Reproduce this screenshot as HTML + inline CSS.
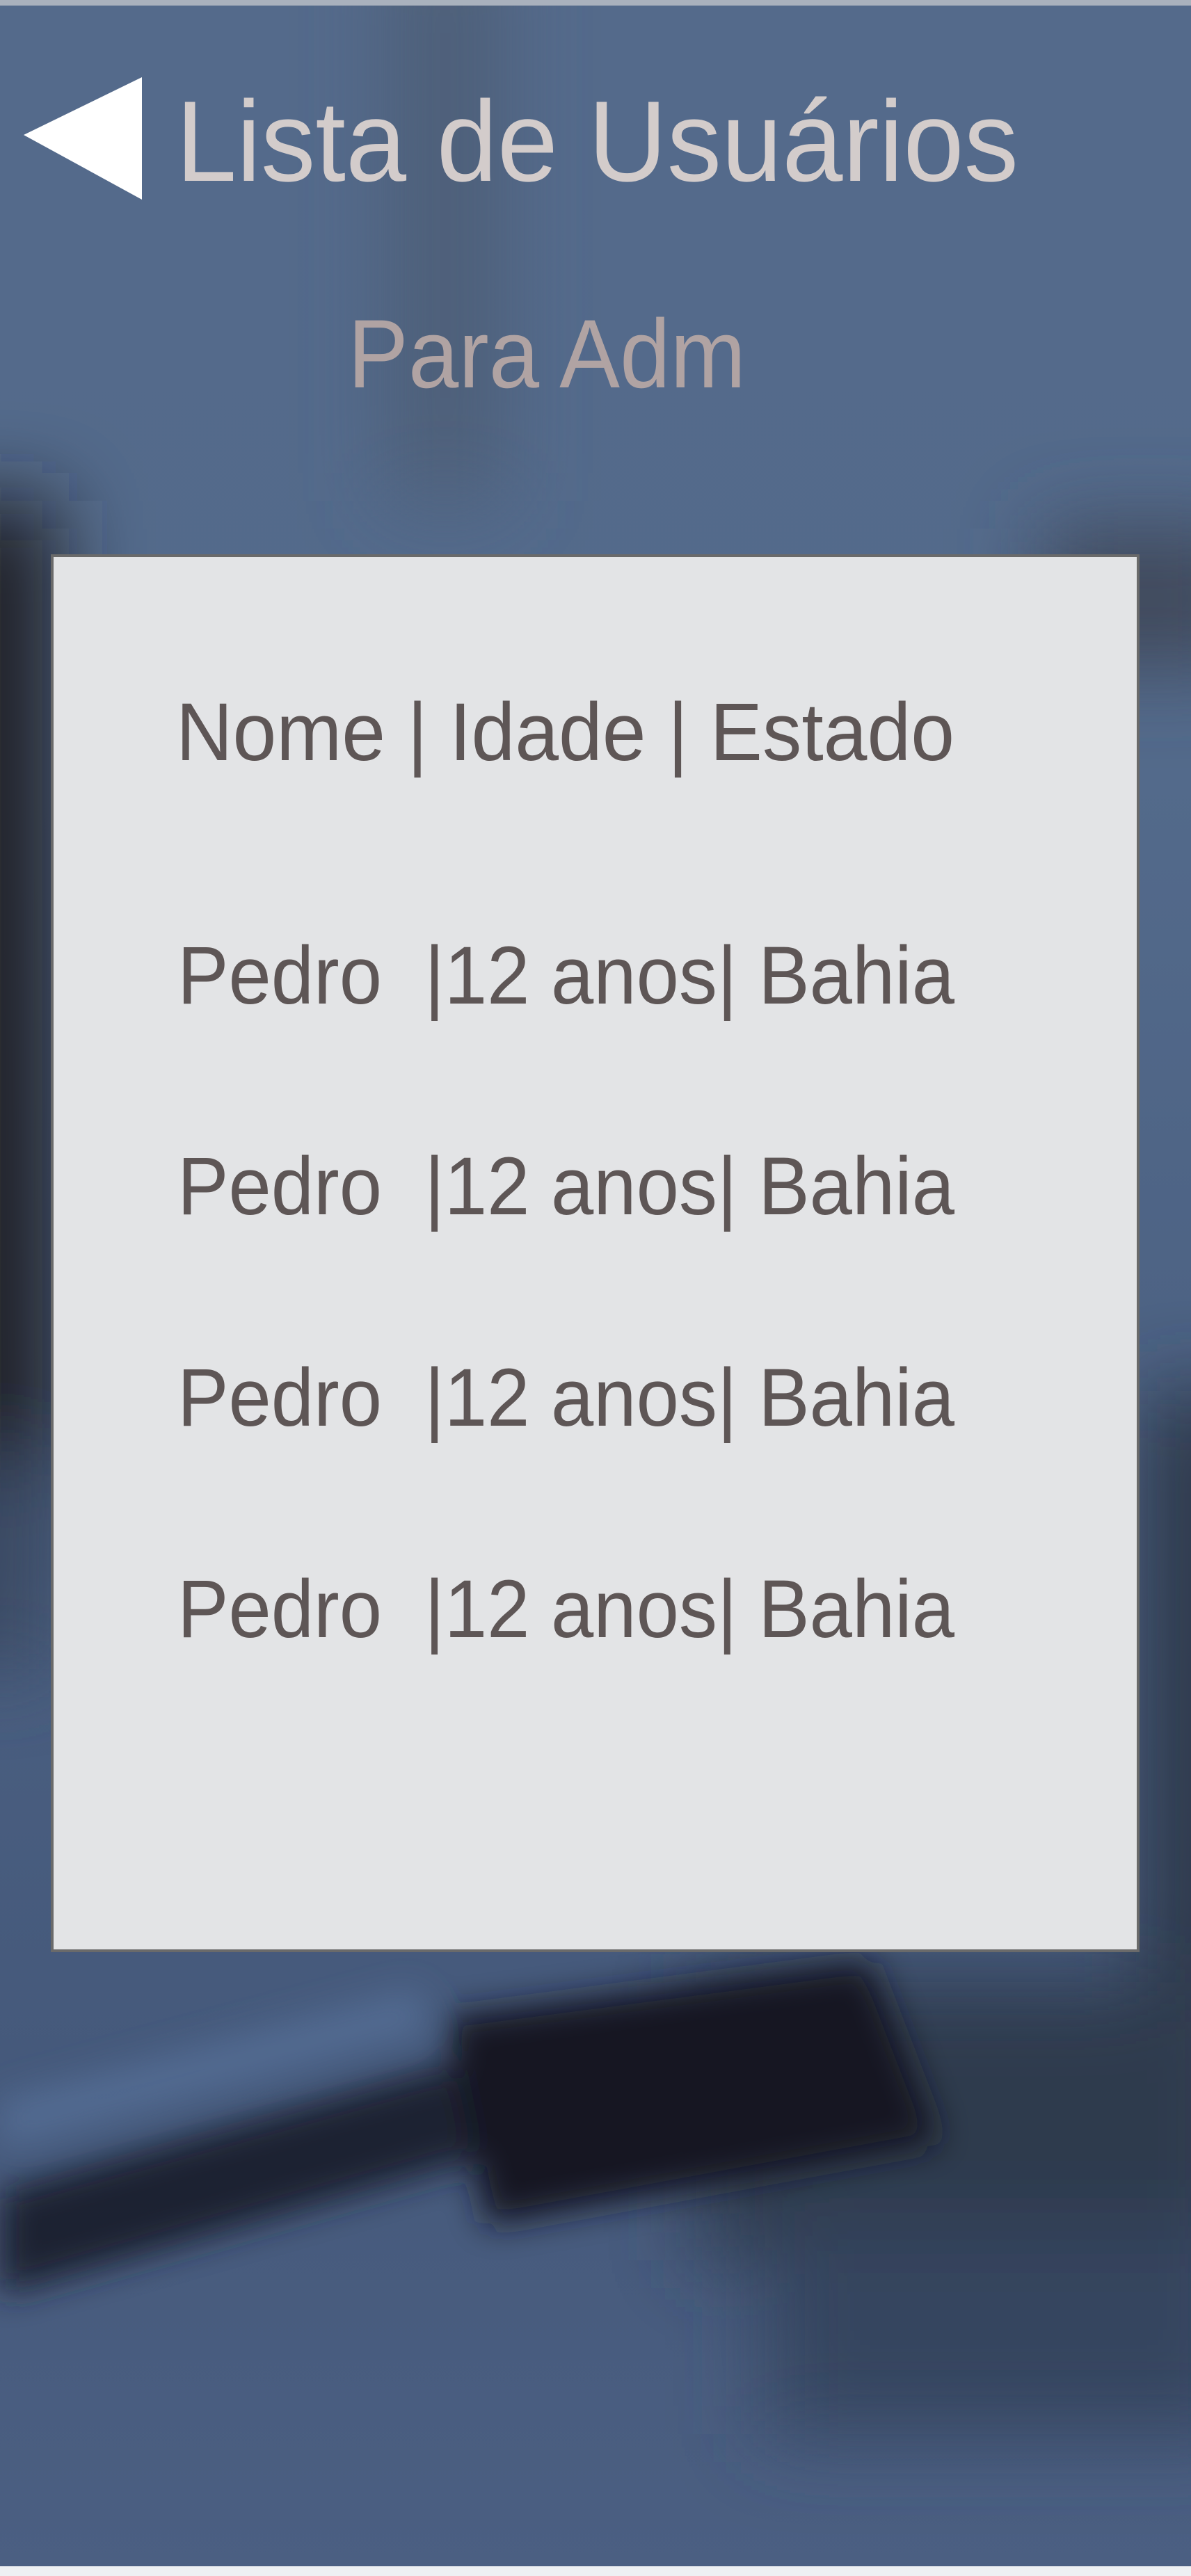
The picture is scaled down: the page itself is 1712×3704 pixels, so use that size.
<!DOCTYPE html>
<html><head><meta charset="utf-8"><style>
html,body{margin:0;padding:0;width:1712px;height:3704px;overflow:hidden;background:#536a8b}
svg{display:block}
text{font-family:"Liberation Sans",sans-serif}
</style></head><body>
<svg width="1712" height="3704" viewBox="0 0 1712 3704" xmlns="http://www.w3.org/2000/svg">
<defs>
<filter id="b" x="-50%" y="-50%" width="200%" height="200%"><feGaussianBlur stdDeviation="60"/></filter>
<filter id="b2" x="-50%" y="-50%" width="200%" height="200%"><feGaussianBlur stdDeviation="25"/></filter>
<linearGradient id="bg" x1="0" y1="0" x2="0" y2="1">
<stop offset="0" stop-color="#546a8b"/><stop offset="0.3" stop-color="#536a8b"/>
<stop offset="0.8" stop-color="#45597b"/><stop offset="1" stop-color="#4b5f82"/>
</linearGradient>
</defs>
<rect width="1712" height="3704" fill="url(#bg)"/>
<g filter="url(#b)">
<rect x="560" y="-100" width="160" height="820" fill="#4d5f78"/>
<rect x="-100" y="720" width="180" height="1500" fill="#232325"/>
<rect x="-100" y="2100" width="170" height="300" fill="#3a4a62"/>
<rect x="1500" y="760" width="300" height="200" fill="#3f4a5c"/>
<rect x="1650" y="2000" width="150" height="900" fill="#2b3444"/>
<rect x="1000" y="2850" width="800" height="400" fill="#2f3a4e"/>
<rect x="1100" y="3200" width="700" height="300" fill="#36445e"/>
</g>
<g filter="url(#b2)">
<polygon points="0,3150 1000,2870 1050,3000 0,3300" fill="#1b2230"/>
<polygon points="640,2900 1250,2820 1350,3080 700,3200" fill="#121820"/>
<polygon points="0,3020 600,2860 620,2920 0,3090" fill="#5a76a0" opacity="0.6"/>
</g>
<rect x="0" y="0" width="1712" height="8" fill="#a9b1bd"/>
<rect x="0" y="3690" width="1712" height="14" fill="#eef0f3"/>
<polygon points="34,194 204,111 204,287" fill="#ffffff"/>
<text x="253" y="260" font-size="165" fill="#d3cccb" textLength="1211" lengthAdjust="spacingAndGlyphs">Lista de Usuários</text>
<text x="500" y="557" font-size="140" fill="#b0a3a3" textLength="572" lengthAdjust="spacingAndGlyphs">Para Adm</text>
<rect x="75" y="799" width="1561" height="2006" fill="#e3e4e6" stroke="#6a6a6a" stroke-width="4"/>
<text x="253" y="1093" font-size="118" fill="#5e5656" textLength="1119" lengthAdjust="spacingAndGlyphs">Nome | Idade | Estado</text>
<text x="255" y="1443" font-size="118" fill="#5e5656" textLength="1117" lengthAdjust="spacingAndGlyphs" xml:space="preserve">Pedro  |12 anos| Bahia</text>
<text x="255" y="1746" font-size="118" fill="#5e5656" textLength="1117" lengthAdjust="spacingAndGlyphs" xml:space="preserve">Pedro  |12 anos| Bahia</text>
<text x="255" y="2050" font-size="118" fill="#5e5656" textLength="1117" lengthAdjust="spacingAndGlyphs" xml:space="preserve">Pedro  |12 anos| Bahia</text>
<text x="255" y="2354" font-size="118" fill="#5e5656" textLength="1117" lengthAdjust="spacingAndGlyphs" xml:space="preserve">Pedro  |12 anos| Bahia</text>
</svg>
</body></html>
